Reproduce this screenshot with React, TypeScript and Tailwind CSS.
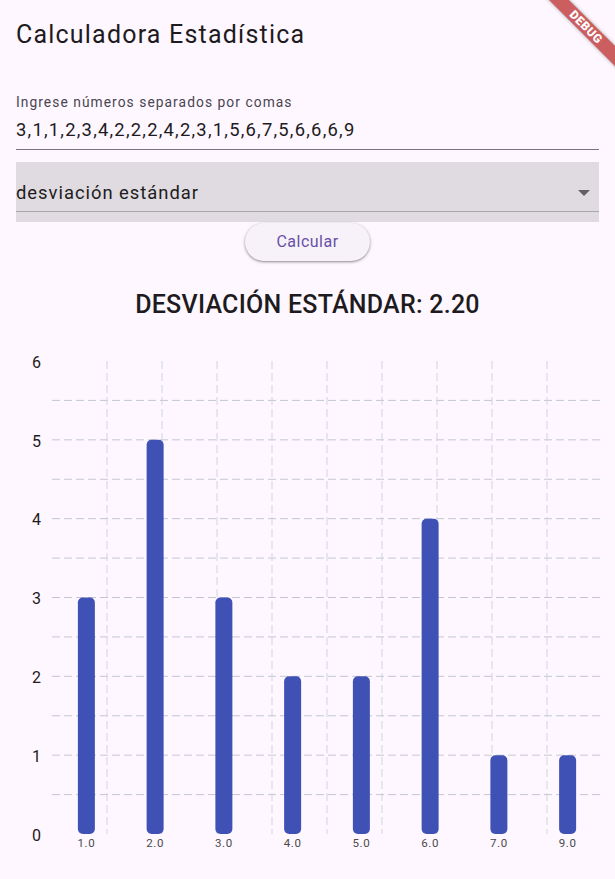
import React from "react";

const BARS = [
  { label: "1.0", value: 3 },
  { label: "2.0", value: 5 },
  { label: "3.0", value: 3 },
  { label: "4.0", value: 2 },
  { label: "5.0", value: 2 },
  { label: "6.0", value: 4 },
  { label: "7.0", value: 1 },
  { label: "9.0", value: 1 },
];

// chart geometry, in svg coords (svg spans whole page width)
const LEFT = 52;
const RIGHT = 602;
const TOP = 16;
const BOTTOM = 489;
const UNIT = (BOTTOM - TOP) / 6;
const SLOT = (RIGHT - LEFT) / BARS.length;

const yOf = (v: number) => BOTTOM - v * UNIT;

function Chart() {
  const halfSteps = Array.from({ length: 11 }, (_, i) => (i + 1) * 0.5);
  const verticals = Array.from({ length: 9 }, (_, i) => LEFT + 55 * (i + 1));

  return (
    <svg width={615} height={520} className="-mx-4 mt-[24px] block">
      {halfSteps.map((v) => (
        <line
          key={"h" + v}
          x1={LEFT}
          x2={RIGHT}
          y1={yOf(v)}
          y2={yOf(v)}
          stroke="#c3c8d0"
          strokeWidth={1}
          strokeDasharray="8 4"
        />
      ))}
      {verticals.map((x) => (
        <line
          key={"v" + x}
          x1={x}
          x2={x}
          y1={TOP}
          y2={BOTTOM}
          stroke="#d0d4db"
          strokeWidth={1}
          strokeDasharray="8 4"
        />
      ))}
      {[0, 1, 2, 3, 4, 5, 6].map((v) => (
        <text
          key={"y" + v}
          x={41}
          y={yOf(v) + 6.7}
          textAnchor="end"
          fontSize={16}
          fill="#1d1b20"
        >
          {v}
        </text>
      ))}
      {BARS.map((b, i) => {
        const cx = LEFT + SLOT * (i + 0.5);
        return (
          <g key={b.label}>
            <rect
              x={cx - 8.5}
              y={yOf(b.value)}
              width={17}
              height={b.value * UNIT}
              rx={5}
              fill="#3f51b5"
            />
            <text
              x={cx}
              y={BOTTOM + 13}
              textAnchor="middle"
              fontSize={11.5}
              letterSpacing={0.6}
              fill="#4a4a4a"
            >
              {b.label}
            </text>
          </g>
        );
      })}
    </svg>
  );
}

export default function App() {
  return (
    <div className="relative min-h-screen w-full overflow-hidden bg-[#fef7ff] font-['Roboto',sans-serif] text-[#1d1b20]">
      <div className="absolute left-[526px] top-[20px] flex h-[14px] w-[120px] rotate-45 items-center justify-center bg-[rgba(183,28,28,0.7)] shadow-[0_0_4px_rgba(0,0,0,0.35)]">
        <span className="text-[12px] font-black leading-none tracking-[0.5px] text-white">
          DEBUG
        </span>
      </div>

      <div className="flex flex-col px-4 pt-[19px]">
        <h1 className="text-[25px] leading-8 font-normal tracking-[1.2px]">
          Calculadora Estadística
        </h1>

        <label className="mt-[43px] text-[13.8px] leading-4 tracking-[1.05px] text-[#49454f]">
          Ingrese números separados por comas
        </label>
        <div className="mt-[7.5px] border-b border-[#79747e] pb-[7.5px] text-[18.4px] leading-6 tracking-[1.22px]">
          3,1,1,2,3,4,2,2,2,4,2,3,1,5,6,7,5,6,6,6,9
        </div>

        <div className="mt-[12px] h-[60px] bg-[#dfdbe0]">
          <div className="flex h-[50px] items-start justify-between border-b border-[#aaa6ad] pt-[18.5px]">
            <span className="text-[18.4px] leading-6 tracking-[0.98px]">
              desviación estándar
            </span>
            <div className="flex h-6 items-center pr-[9px]">
              <svg width="12" height="6" viewBox="0 0 12 6">
                <path d="M0 0 L12 0 L6 6 Z" fill="#616161" />
              </svg>
            </div>
          </div>
        </div>

        <button className="mx-auto mt-px flex h-[38px] w-[125px] items-center justify-center rounded-full bg-[#f7f2fa] text-[16px] font-normal tracking-[0.5px] text-[#6750a4] shadow-[0_1px_2px_rgba(0,0,0,0.3),0_1px_3px_1px_rgba(0,0,0,0.12)]">
          Calcular
        </button>

        <h2 className="mt-[28px] text-center text-[25px] leading-8 font-medium tracking-[0.25px]">
          DESVIACIÓN ESTÁNDAR: 2.20
        </h2>

        <Chart />
      </div>
    </div>
  );
}
